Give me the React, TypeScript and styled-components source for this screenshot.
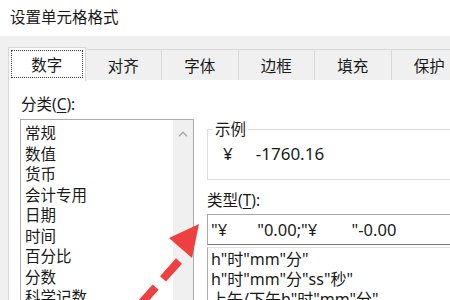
import React from 'react'
import styled, { createGlobalStyle } from 'styled-components'

const FONT = `"Noto Sans", "Noto Sans CJK SC", sans-serif`

const categories = [
  '常规',
  '数值',
  '货币',
  '会计专用',
  '日期',
  '时间',
  '百分比',
  '分数',
  '科学记数'
]

const tabs = ['数字', '对齐', '字体', '边框', '填充', '保护']

const typeFormats = ['h"时"mm"分"', 'h"时"mm"分"ss"秒"', '上午/下午h"时"mm"分"']

const App = () => {
  return (
    <>
      <GlobalStyle />
      <Dialog>
        <TitleBar>设置单元格格式</TitleBar>
        <Body>
          <TabRow>
            {tabs.map((name, i) => (
              <Tab key={name} active={i === 0}>
                {i === 0 ? <FocusRing>{name}</FocusRing> : name}
              </Tab>
            ))}
          </TabRow>
          <Page>
            <LeftColumn>
              <FieldLabel>
                分类(<u>C</u>):
              </FieldLabel>
              <ListBox>
                <ListItems>
                  {categories.map((c) => (
                    <CategoryItem key={c}>{c}</CategoryItem>
                  ))}
                </ListItems>
                <ScrollBar>
                  <svg width="10" height="6" viewBox="0 0 10 6">
                    <path
                      d="M1 5.2 L5 1.2 L9 5.2"
                      fill="none"
                      stroke="#a6a6a6"
                      strokeWidth="1.3"
                    />
                  </svg>
                </ScrollBar>
              </ListBox>
            </LeftColumn>
            <RightColumn>
              <GroupBox>
                <Legend>示例</Legend>
                <SampleRow>
                  <span>¥</span>
                  <span>-1760.16</span>
                </SampleRow>
              </GroupBox>
              <TypeLabel>
                类型(<u>T</u>):
              </TypeLabel>
              <TypeInput>{'"¥       "0.00;"¥        "-0.00'}</TypeInput>
              <TypeList>
                {typeFormats.map((f) => (
                  <TypeItem key={f}>{f}</TypeItem>
                ))}
              </TypeList>
            </RightColumn>
          </Page>
        </Body>
        <ArrowOverlay width="450" height="300" viewBox="0 0 450 300">
          <line
            x1="179"
            y1="261"
            x2="128"
            y2="318"
            stroke="#ef4040"
            strokeWidth="8"
            strokeDasharray="24 11"
          />
          <polygon points="199,224 169,238 192,258" fill="#ef4040" />
        </ArrowOverlay>
      </Dialog>
    </>
  )
}

const GlobalStyle = createGlobalStyle`
  body {
    margin: 0;
    background: #ffffff;
    overflow: hidden;
    font-family: ${FONT};
    color: #1a1a1a;
  }
`

const Dialog = styled.div`
  position: relative;
  width: 450px;
  height: 300px;
  overflow: hidden;
  display: flex;
  flex-direction: column;
  background: #ffffff;
`

const TitleBar = styled.div`
  height: 36px;
  flex-shrink: 0;
  display: flex;
  align-items: center;
  padding-left: 10px;
  padding-bottom: 3px;
  box-sizing: border-box;
  font-size: 15.5px;
  color: #1a1a1a;
`

const Body = styled.div`
  flex: 1;
  display: flex;
  flex-direction: column;
  background: #f0f0f0;
  padding: 11px 0 0 8px;
  min-height: 0;
`

const TabRow = styled.div`
  display: flex;
  align-items: flex-start;
  height: 33px;
  flex-shrink: 0;
  position: relative;
  z-index: 1;
`

const Tab = styled.div<{ active?: boolean }>`
  width: 77.5px;
  flex-shrink: 0;
  box-sizing: border-box;
  height: ${({ active }) => (active ? '34px' : '31px')};
  margin-top: ${({ active }) => (active ? '0' : '2px')};
  margin-left: -1px;
  border: 1px solid #d9d9d9;
  border-bottom: none;
  background: ${({ active }) => (active ? '#ffffff' : '#f0f0f0')};
  padding: ${({ active }) => (active ? '2px 2px 3px 2px' : '0')};
  display: flex;
  align-items: center;
  justify-content: center;
  font-size: 15.5px;
  color: #1a1a1a;

  &:first-child {
    margin-left: 0;
  }
`

const FocusRing = styled.div`
  flex: 1;
  align-self: stretch;
  display: flex;
  align-items: center;
  justify-content: center;
  border: 1px dotted #3c3c3c;
`

const Page = styled.div`
  flex: 1;
  display: flex;
  gap: 13px;
  background: #ffffff;
  border-top: 1px solid #d9d9d9;
  border-left: 1px solid #d9d9d9;
  margin-top: -1px;
  padding: 14px 0 0 11px;
  min-height: 0;
  overflow: hidden;
`

const LeftColumn = styled.div`
  width: 174px;
  flex-shrink: 0;
  display: flex;
  flex-direction: column;
`

const FieldLabel = styled.div`
  font-size: 15.5px;
  line-height: 20px;
  padding-left: 1px;

  u {
    text-decoration-thickness: 1px;
    text-underline-offset: 2px;
  }
`

const ListBox = styled.div`
  margin-top: 5px;
  flex: 1;
  display: flex;
  border: 1px solid #acacac;
  border-bottom: none;
`

const ListItems = styled.div`
  flex: 1;
  padding: 3px 0 0 4px;
`

const CategoryItem = styled.div`
  font-size: 15.5px;
  line-height: 20.5px;
  white-space: nowrap;
`

const ScrollBar = styled.div`
  width: 20px;
  background: #f0f0f0;
  display: flex;
  justify-content: center;
  padding-top: 11px;
  box-sizing: border-box;
`

const RightColumn = styled.div`
  flex: 1;
  display: flex;
  flex-direction: column;
  min-width: 0;
`

const GroupBox = styled.fieldset`
  margin: 25px 0 0 0;
  height: 61px;
  flex-shrink: 0;
  box-sizing: border-box;
  border: 1px solid #dcdcdc;
  border-right: none;
  padding: 0 0 0 15px;
  min-width: 0;
`

const Legend = styled.legend`
  font-size: 15.5px;
  line-height: 20px;
  padding: 0 2px;
  margin-left: -10px;
`

const SampleRow = styled.div`
  display: flex;
  gap: 23px;
  margin-top: 5px;
  font-size: 17px;
  line-height: 20px;
`

const TypeLabel = styled(FieldLabel)`
  margin-top: 10px;
  padding-left: 0;
`

const TypeInput = styled.div`
  margin-top: 4px;
  height: 31px;
  flex-shrink: 0;
  box-sizing: border-box;
  border: 1px solid #a8a8a8;
  border-bottom-color: #7a7a7a;
  border-right: none;
  padding-left: 3px;
  display: flex;
  align-items: center;
  font-size: 16.5px;
  white-space: pre;
`

const TypeList = styled.div`
  margin-top: 2px;
  flex: 1;
  border-left: 1px solid #acacac;
  border-top: 1px solid #e2e2e2;
  padding: 1px 0 0 3px;
`

const TypeItem = styled.div`
  font-size: 16px;
  line-height: 20px;
  white-space: nowrap;
`

const ArrowOverlay = styled.svg`
  position: absolute;
  left: 0;
  top: 0;
  pointer-events: none;
`

export default App
